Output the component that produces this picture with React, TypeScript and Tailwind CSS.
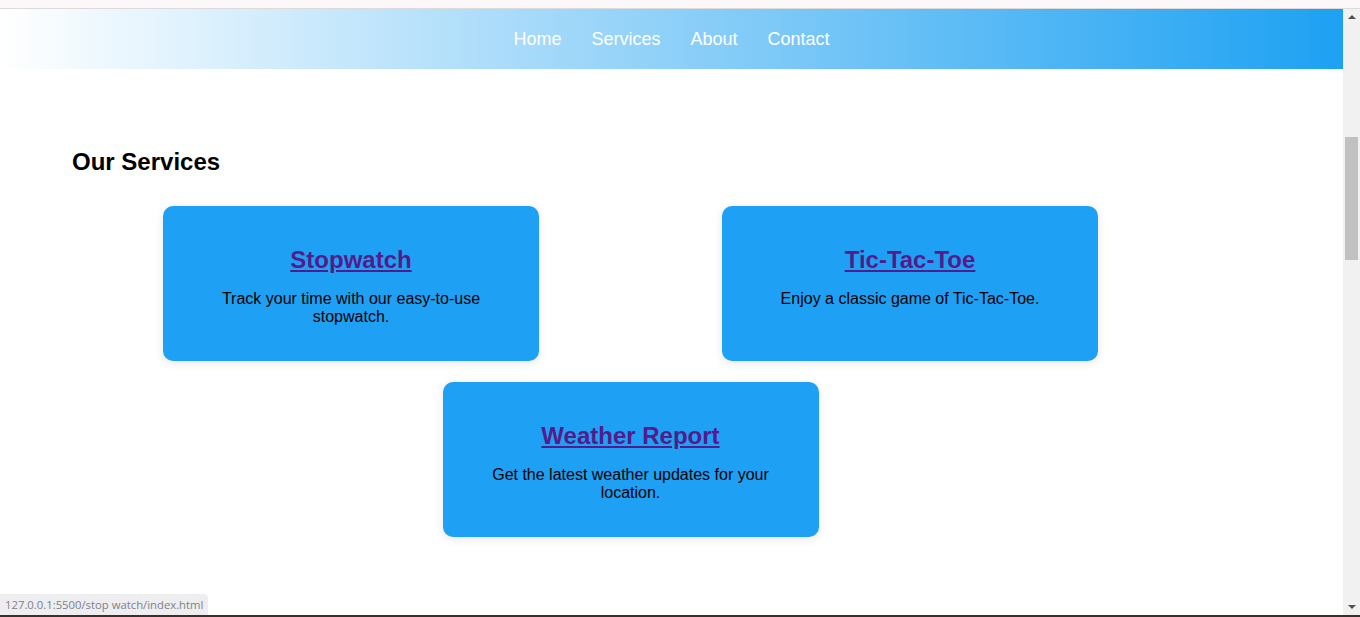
import React from 'react';

type Service = {
    title: string;
    text: string;
};

const services: Service[] = [
    { title: 'Stopwatch', text: 'Track your time with our easy-to-use stopwatch.' },
    { title: 'Tic-Tac-Toe', text: 'Enjoy a classic game of Tic-Tac-Toe.' },
    { title: 'Weather Report', text: 'Get the latest weather updates for your location.' },
];

const navLinks = ['Home', 'Services', 'About', 'Contact'];

const ServiceCard: React.FC<{ service: Service }> = ({ service }) => (
    <div className="h-[155px] w-[376px] rounded-[10px] bg-[#1ea1f4] px-5 pt-[40px] text-center shadow-[0_2px_10px_rgba(0,0,0,0.1)]">
        <a href="#" className="text-[24px] leading-[27.6px] font-bold text-[#551a8b] underline">
            {service.title}
        </a>
        <p className="mt-[15px] text-[16px] leading-[18px] text-black">{service.text}</p>
    </div>
);

const App: React.FC = () => {
    return (
        <div className="relative flex h-[617px] flex-col overflow-hidden bg-white font-['Liberation_Sans',Arial,sans-serif]">
            {/* browser strip */}
            <div className="h-[9px] shrink-0 border-b border-[#dedada] bg-[#fcf7f8]"></div>

            <div className="flex min-h-0 flex-1">
                <div className="flex-1">
                    {/* Header */}
                    <header className="flex h-[60px] items-center justify-center gap-[30px] bg-[linear-gradient(to_right,#ffffff,#1da1f2)]">
                        {navLinks.map((link) => (
                            <a key={link} href="#" className="text-[18px] leading-[20.7px] text-white">
                                {link}
                            </a>
                        ))}
                    </header>

                    {/* Services */}
                    <section className="pl-[71.5px] pt-[79px]">
                        <h2 className="ml-[0.5px] text-[24px] leading-[28px] font-bold text-black">Our Services</h2>
                        <div className="mt-[30px] flex w-[1118px] flex-wrap justify-around gap-y-[21px]">
                            {services.map((service) => (
                                <ServiceCard key={service.title} service={service} />
                            ))}
                        </div>
                    </section>
                </div>

                {/* Scrollbar */}
                <div className="flex w-[17px] shrink-0 flex-col items-center bg-[#f1f1f1]">
                    <div className="mt-[6px] h-0 w-0 border-x-[4px] border-b-[4px] border-x-transparent border-b-[#505050]"></div>
                    <div className="mt-[118px] h-[123px] w-[13px] bg-[#c1c1c1]"></div>
                    <div className="mt-auto mb-[6px] h-0 w-0 border-x-[4px] border-t-[4px] border-x-transparent border-t-[#505050]"></div>
                </div>
            </div>

            <div className="h-[2px] shrink-0 bg-[#38302c]"></div>

            {/* Status bubble */}
            <div className="absolute bottom-[2px] left-0 h-[21px] rounded-tr-[4px] bg-[#eeeef1] px-[5px] font-['Open_Sans','Noto_Sans',sans-serif] text-[11.3px] leading-[21px] text-[#80808a]">
                127.0.0.1:5500/stop watch/index.html
            </div>
        </div>
    );
};

export default App;
